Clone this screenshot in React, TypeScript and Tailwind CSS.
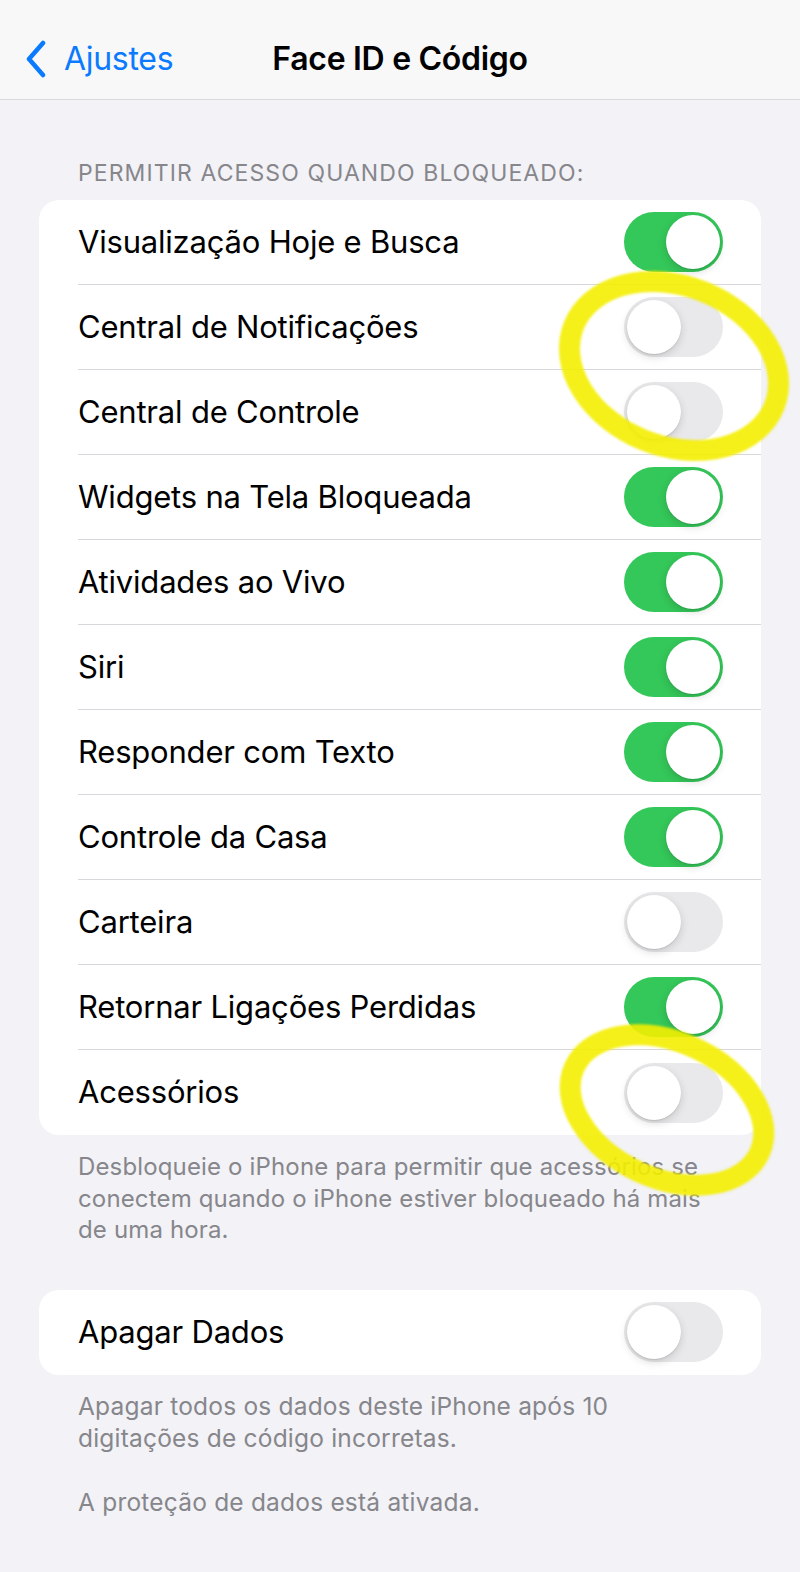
import React from "react";

const rows: [string, boolean][] = [
  ["Visualização Hoje e Busca", true],
  ["Central de Notificações", false],
  ["Central de Controle", false],
  ["Widgets na Tela Bloqueada", true],
  ["Atividades ao Vivo", true],
  ["Siri", true],
  ["Responder com Texto", true],
  ["Controle da Casa", true],
  ["Carteira", false],
  ["Retornar Ligações Perdidas", true],
  ["Acessórios", false],
];

function Toggle({ on }: { on: boolean }) {
  return (
    <div
      className={`w-[99px] h-[60px] rounded-full p-[3px] flex items-center ${
        on ? "bg-[#34c759] justify-end" : "bg-[#e9e9eb] justify-start"
      }`}
    >
      <div className="w-[54px] h-[54px] rounded-full bg-white shadow-[0_3px_8px_rgba(0,0,0,0.15),0_1px_1px_rgba(0,0,0,0.1)]" />
    </div>
  );
}

function Row({ label, on, last }: { label: string; on: boolean; last?: boolean }) {
  return (
    <div className="flex items-center h-[85px] pl-[39px]">
      <div
        className={`flex-1 h-full flex items-center justify-between pr-[38px] ${
          last ? "" : "border-b border-[#d8d8dc]"
        }`}
      >
        <span className="text-[31px] text-black tracking-[-0.2px]">{label}</span>
        <Toggle on={on} />
      </div>
    </div>
  );
}

export default function App() {
  return (
    <div
      className="relative w-[800px] h-[1572px] bg-[#f2f2f7] overflow-hidden"
      style={{ fontFamily: "Inter, 'Noto Sans', sans-serif" }}
    >
      <div className="h-[100px] bg-[#f8f8f9] border-b border-[#d9d9dc] flex items-center pt-[18px] relative">
        <div className="flex items-center pl-[25px] text-[#0a7aff]">
          <svg width="22" height="38" viewBox="0 0 22 38" fill="none">
            <path d="M18 3 L4 19 L18 35" stroke="#0a7aff" strokeWidth="4.5" strokeLinecap="round" strokeLinejoin="round" />
          </svg>
          <span className="ml-[17px] text-[32px] tracking-[-0.3px]">Ajustes</span>
        </div>
        <div className="absolute left-0 right-0 top-[18px] bottom-0 flex items-center justify-center text-[32px] font-semibold text-black tracking-[-0.3px] pointer-events-none">
          Face ID e Código
        </div>
      </div>

      <div className="pt-[58px] pl-[78px] text-[23px] text-[#86868b] tracking-[1.1px] leading-[30px]">
        PERMITIR ACESSO QUANDO BLOQUEADO:
      </div>

      <div className="mx-[39px] mt-[12px] bg-white rounded-[20px] overflow-hidden">
        {rows.map(([l, on], i) => (
          <Row key={l} label={l} on={on} last={i === rows.length - 1} />
        ))}
      </div>

      <div className="pl-[78px] pt-[16px] pr-[78px] text-[24px] tracking-[0.15px] leading-[31.5px] text-[#86868b]">
        Desbloqueie o iPhone para permitir que acessórios se conectem quando o iPhone estiver bloqueado há mais de uma hora.
      </div>

      <div className="mx-[39px] mt-[44px] bg-white rounded-[20px] overflow-hidden">
        <Row label="Apagar Dados" on={false} last />
      </div>

      <div className="pl-[78px] pt-[15px] pr-[150px] text-[24.5px] tracking-[0.2px] leading-[32px] text-[#86868b]">
        Apagar todos os dados deste iPhone após 10 digitações de código incorretas.
      </div>
      <div className="pl-[78px] pt-[32px] text-[24.5px] tracking-[0.2px] leading-[32px] text-[#86868b]">
        A proteção de dados está ativada.
      </div>

      <svg className="absolute left-0 top-0 pointer-events-none" width="800" height="1572">
        <g style={{ filter: "blur(0.8px)" }}>
          <ellipse cx="674" cy="366" rx="108" ry="80" transform="rotate(22 674 366)" fill="none" stroke="#f4ee00" strokeWidth="21" opacity="0.9" />
          <ellipse cx="667" cy="1110" rx="102" ry="68" transform="rotate(25 667 1110)" fill="none" stroke="#f4ee00" strokeWidth="21" opacity="0.9" />
        </g>
      </svg>
    </div>
  );
}
